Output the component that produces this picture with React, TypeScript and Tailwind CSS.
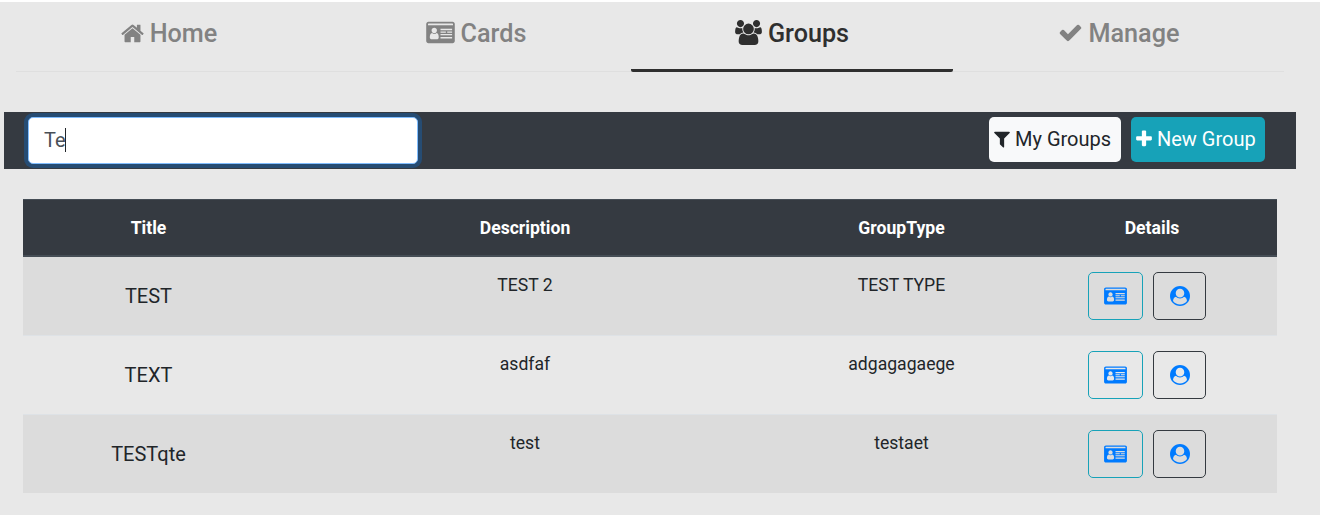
import React from "react";

type IconProps = { className?: string };

const HomeIcon = ({ className }: IconProps) => (
  <svg viewBox="64 0 1664 1792" className={className} fill="currentColor">
    <path d="M1472 992v480q0 26-19 45t-45 19h-384v-384h-256v384h-384q-26 0-45-19t-19-45v-480q0-1 .5-3t.5-3l575-474 575 474q1 2 1 6zm223-69l-62 74q-8 9-21 11h-3q-13 0-21-7l-692-577-692 577q-12 8-24 7-13-2-21-11l-62-74q-8-10-7-23.5t11-21.5l719-599q32-26 76-26t76 26l244 204v-195q0-14 9-23t23-9h192q14 0 23 9t9 23v408l219 182q10 8 11 21.5t-7 23.5z" />
  </svg>
);

const CardIcon = ({ className }: IconProps) => (
  <svg viewBox="0 0 2048 1792" className={className} fill="currentColor">
    <path
      fillRule="evenodd"
      d="M160 128h1728q66 0 113 47t47 113v1216q0 66-47 113t-113 47H160q-66 0-113-47T0 1504V288q0-66 47-113t113-47z M160 256q-32 0-32 32v96h1792v-96q0-32-32-32z M896 1229q0-98-31-186t-124-104q-62 60-154 60t-165-60q-95 16-130 104t-36 186q0 79 40 115t88 36h384q48 0 88-36t40-115z M768 752q0-80-56-136t-136-56-136 56-56 136 56 136 136 56 136-56 56-136z M1024 1210h832v110h-832z M1024 1010h832v90h-832z M1024 620h832v110h-832z M1024 820h384v90h-384z M1504 820h352v90h-352z"
    />
  </svg>
);

const UsersIcon = ({ className }: IconProps) => (
  <svg viewBox="64 0 1920 1792" className={className} fill="currentColor">
    <path d="M657 896q-162 5-265 128h-134q-82 0-138-40.5t-56-118.5q0-353 124-353 6 0 43.5 21t97.5 42.5 119 21.5q67 0 133-23-5 37-5 66 0 139 81 256zm1071 637q0 120-73 189.5t-194 69.5h-874q-121 0-194-69.5t-73-189.5q0-53 3.5-103.5t14-109 26.5-108.5 43-97.5 62-81 85.5-53.5 111.5-20q10 0 43 21.5t73 48 107 48 135 21.5 135-21.5 107-48 73-48 43-21.5q61 0 111.5 20t85.5 53.5 62 81 43 97.5 26.5 108.5 14 109 3.5 103.5zm-1024-1277q0 106-75 181t-181 75-181-75-75-181 75-181 181-75 181 75 75 181zm704 384q0 159-112.5 271.5t-271.5 112.5-271.5-112.5-112.5-271.5 112.5-271.5 271.5-112.5 271.5 112.5 112.5 271.5zm576 225q0 78-56 118.5t-138 40.5h-134q-103-123-265-128 81-117 81-256 0-29-5-66 66 23 133 23 59 0 119-21.5t97.5-42.5 43.5-21q124 0 124 353zm-128-609q0 106-75 181t-181 75-181-75-75-181 75-181 181-75 181 75 75 181z" />
  </svg>
);

const CheckIcon = ({ className }: IconProps) => (
  <svg viewBox="0 0 1792 1792" className={className} fill="currentColor">
    <path d="M1671 566q0 40-28 68l-724 724-136 136q-28 28-68 28t-68-28l-136-136-362-362q-28-28-28-68t28-68l136-136q28-28 68-28t68 28l294 295 656-657q28-28 68-28t68 28l136 136q28 28 28 68z" />
  </svg>
);

const FilterIcon = ({ className }: IconProps) => (
  <svg viewBox="192 0 1408 1792" className={className} fill="currentColor">
    <path d="M1595 295q17 41-14 70l-493 493v742q0 42-39 59-13 5-25 5-27 0-45-19l-256-256q-19-19-19-45v-486l-493-493q-31-29-14-70 17-39 59-39h1280q42 0 59 39z" />
  </svg>
);

const PlusIcon = ({ className }: IconProps) => (
  <svg viewBox="192 0 1408 1792" className={className} fill="currentColor">
    <path d="M1600 736v192q0 40-28 68t-68 28h-416v416q0 40-28 68t-68 28h-192q-40 0-68-28t-28-68v-416h-416q-40 0-68-28t-28-68v-192q0-40 28-68t68-28h416v-416q0-40 28-68t68-28h192q40 0 68 28t28 68v416h416q40 0 68 28t28 68z" />
  </svg>
);

const UserCircleIcon = ({ className }: IconProps) => (
  <svg viewBox="0 0 1792 1792" className={className} fill="currentColor">
    <path d="M1523 1339q-22-155-87.5-257.5t-184.5-118.5q-67 74-159.5 115.5t-195.5 41.5-195.5-41.5-159.5-115.5q-119 16-184.5 118.5t-87.5 257.5q106 150 271 237.5t356 87.5 356-87.5 271-237.5zm-243-699q0-159-112.5-271.5t-271.5-112.5-271.5 112.5-112.5 271.5 112.5 271.5 271.5 112.5 271.5-112.5 112.5-271.5zm512 256q0 182-71 347.5t-190.5 286-285.5 191.5-349 71q-182 0-348-71t-286-191-191-286-71-348 71-348 191-286 286-191 348-71 348 71 286 191 191 286 71 348z" />
  </svg>
);

const groups = [
  { title: "TEST", description: "TEST 2", type: "TEST TYPE" },
  { title: "TEXT", description: "asdfaf", type: "adgagagaege" },
  { title: "TESTqte", description: "test", type: "testaet" },
];

const rowStyles = [
  "h-[78px] bg-[#dcdcdc] pt-[15px]",
  "h-[79px] border-t border-[#dee2e6] pt-[15px]",
  "h-[79px] border-t border-[#dee2e6] bg-[#dcdcdc] pt-[15px]",
];

const tab = "flex items-start justify-center pt-[12px] leading-[39px]";

export default function App() {
  return (
    <div className="h-[515px] w-[1320px] overflow-hidden border-t-2 border-white bg-[#e8e8e8] font-['Roboto',sans-serif] text-[#212529]">
      <nav className="ml-4 flex h-[70px] w-[1268px] border-b border-[#dfdfdf] text-[25.2px] font-medium text-[#828282]">
        <a className={`${tab} w-[305px] pl-px`}>
          <HomeIcon className="mt-[7px] mr-[6px] h-[25px] w-[23px]" />
          Home
        </a>
        <a className={`${tab} w-[310px]`}>
          <CardIcon className="mt-[6px] mr-[6px] h-[25px] w-[29px]" />
          Cards
        </a>
        <a className={`${tab} h-[70px] w-[322px] rounded-[2px] border-b-[3px] border-[#2f2f2f] text-[#2f2f2f]`}>
          <UsersIcon className="mt-[6px] mr-[6px] h-[25px] w-[27px]" />
          Groups
        </a>
        <a className={`${tab} w-[331px]`}>
          <CheckIcon className="mt-[6px] mr-[6px] h-[25px] w-[25px]" />
          Manage
        </a>
      </nav>

      <div className="mt-[40px] ml-1 flex h-[57px] w-[1292px] items-start bg-[#353a41] pt-[5px] pr-[31px] pl-6 text-[20px]">
        <div className="flex h-[47px] w-[390px] items-center rounded-[5px] border border-[#80bdff] bg-white pb-px pl-[15px] text-[#495057] ring-4 ring-[#264c73]">
          Te
          <span className="-ml-px h-6 w-px bg-[#212529]" />
        </div>
        <button className="ml-auto flex h-[45px] w-[132px] items-center rounded-[5px] bg-[#f8f9fa] pb-px pl-[5px]">
          <FilterIcon className="mr-[5px] h-5 w-4 shrink-0" />
          <span className="whitespace-nowrap">My Groups</span>
        </button>
        <button className="ml-[10px] flex h-[45px] w-[134px] items-center rounded-[5px] bg-[#17a2b8] pb-px pl-[5px] text-white">
          <PlusIcon className="mr-[5px] h-5 w-4 shrink-0" />
          <span className="whitespace-nowrap">New Group</span>
        </button>
      </div>

      <div className="mt-[30px] ml-[23px] w-[1254px] text-center text-[17.6px]">
        <div className="grid h-[58px] grid-cols-[251px_502px_251px_250px] items-center border-t border-b-2 border-[#454d55] bg-[#353a41] pt-[2px] font-bold text-white">
          <span>Title</span>
          <span>Description</span>
          <span>GroupType</span>
          <span>Details</span>
        </div>
        {groups.map((group, i) => (
          <div key={group.title} className={`grid grid-cols-[251px_502px_251px_250px] ${rowStyles[i]}`}>
            <span className="text-[20px] leading-[48px]">{group.title}</span>
            <span className="leading-[26px]">{group.description}</span>
            <span className="leading-[26px]">{group.type}</span>
            <div className="flex gap-[10px] pl-[61px] text-[#007bff]">
              <button className="flex h-12 w-[55px] items-center justify-center rounded-[5px] border border-[#17a2b8]">
                <CardIcon className="h-5 w-[23px]" />
              </button>
              <button className="flex h-12 w-[53px] items-center justify-center rounded-[5px] border border-[#343a40]">
                <UserCircleIcon className="h-5 w-5" />
              </button>
            </div>
          </div>
        ))}
      </div>
    </div>
  );
}
